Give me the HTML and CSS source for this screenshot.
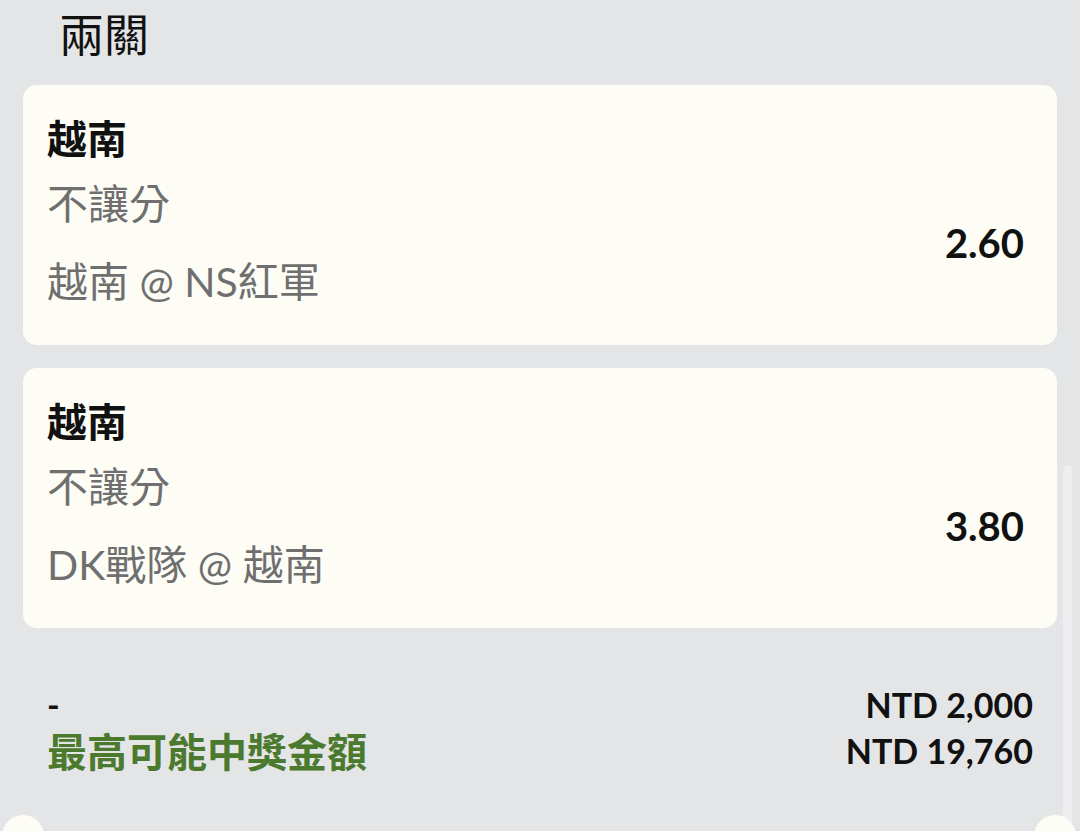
FILE: index.html
```html
<!DOCTYPE html>
<html lang="zh-Hant">
<head>
<meta charset="utf-8">
<link rel="stylesheet" href="styles.css">
</head>
<body>
<main class="page">
  <h1 class="title">兩關</h1>
  <section class="card">
    <div class="team">越南</div>
    <div class="row">
      <div class="lines">
        <div class="line">不讓分</div>
        <div class="line">越南 @ NS紅軍</div>
      </div>
      <div class="odds">2.60</div>
    </div>
  </section>
  <section class="card">
    <div class="team">越南</div>
    <div class="row">
      <div class="lines">
        <div class="line">不讓分</div>
        <div class="line">DK戰隊 @ 越南</div>
      </div>
      <div class="odds">3.80</div>
    </div>
  </section>
  <section class="summary">
    <div class="sum-row">
      <span class="dash">-</span>
      <span class="amount">NTD 2,000</span>
    </div>
    <div class="sum-row">
      <span class="label">最高可能中獎金額</span>
      <span class="amount">NTD 19,760</span>
    </div>
  </section>
</main>
<div class="scrollbar"></div>
<div class="notch notch-left"></div>
<div class="notch notch-right"></div>
</body>
</html>
```
FILE: styles.css
```css
html, body {
  margin: 0;
  padding: 0;
  height: 100%;
  overflow: hidden;
}
body {
  background: #e4e5e7;
  font-family: "Lato", "Noto Sans CJK TC", sans-serif;
  color: #111;
  position: relative;
}
.page {
  padding: 0 23px;
  display: flex;
  flex-direction: column;
}
.title {
  margin: 0;
  padding-left: 36px;
  font-size: 45px;
  font-weight: 400;
  line-height: 65px;
  height: 85px;
  box-sizing: border-box;
  font-family: "Noto Sans CJK TC", sans-serif;
  color: #111;
}
.card {
  background: #fdfdf6;
  border-radius: 14px;
  padding: 24px 33px 22px 24px;
  height: 260px;
  box-sizing: border-box;
  margin-bottom: 23px;
}
.team {
  font-family: "Noto Sans CJK TC", sans-serif;
  font-weight: 700;
  font-size: 40px;
  line-height: 56px;
  color: #111;
}
.row {
  display: flex;
  align-items: center;
  justify-content: space-between;
}
.line {
  font-family: "Lato", "Noto Sans CJK TC", sans-serif;
  font-size: 41px;
  line-height: 78px;
  color: #6f6f6f;
}
.odds {
  font-family: "Lato", sans-serif;
  font-weight: 700;
  font-size: 40px;
  color: #111;
}
.summary {
  margin-top: 30px;
  padding: 0 24px;
  display: flex;
  flex-direction: column;
}
.sum-row {
  display: flex;
  justify-content: space-between;
  align-items: center;
  height: 46px;
}
.dash {
  font-family: "Lato", sans-serif;
  font-weight: 700;
  font-size: 34px;
}
.label {
  font-family: "Noto Sans CJK TC", sans-serif;
  font-weight: 700;
  font-size: 40px;
  line-height: 46px;
  color: #4b7a2e;
}
.amount {
  font-family: "Lato", sans-serif;
  font-weight: 700;
  font-size: 34px;
  color: #111;
}
.scrollbar {
  position: absolute;
  left: 1063px;
  top: 465px;
  width: 9px;
  height: 380px;
  border-radius: 5px;
  background: #eeeef0;
}
.notch {
  position: absolute;
  width: 42px;
  height: 42px;
  border-radius: 50%;
  background: #fdfdf6;
  top: 815px;
}
.notch-left { left: 2px; }
.notch-right { left: 1034px; }
```
